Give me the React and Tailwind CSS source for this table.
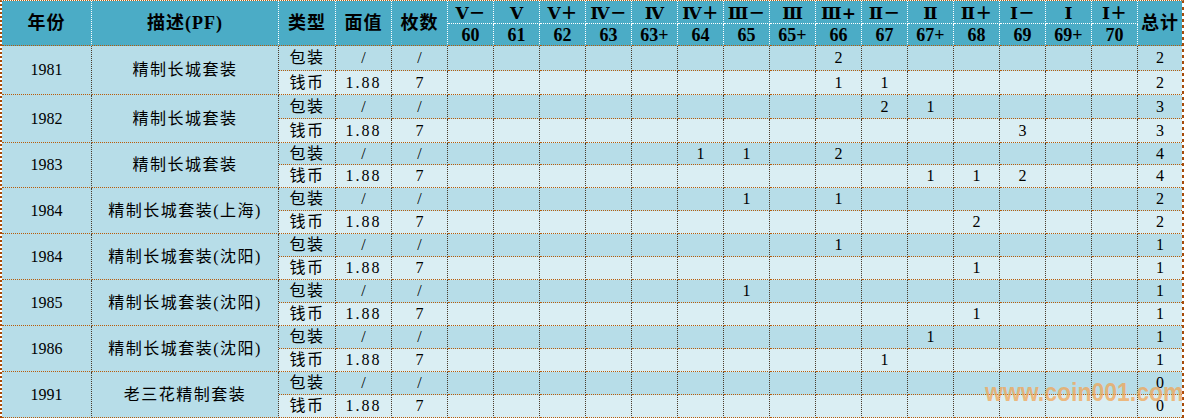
import React from 'react';

const grades = [
    ['Ⅴ－', '60'], ['Ⅴ', '61'], ['Ⅴ＋', '62'], ['Ⅳ－', '63'], ['Ⅳ', '63+'],
    ['Ⅳ＋', '64'], ['Ⅲ－', '65'], ['Ⅲ', '65+'], ['Ⅲ+', '66'], ['Ⅱ－', '67'],
    ['Ⅱ', '67+'], ['Ⅱ＋', '68'], ['Ⅰ－', '69'], ['Ⅰ', '69+'], ['Ⅰ＋', '70'],
];

// counts by grade index: { idx: count }
const rows = [
    { year: '1981', desc: '精制长城套装', pack: { 8: 2 }, coin: { 8: 1, 9: 1 }, t: [2, 2] },
    { year: '1982', desc: '精制长城套装', pack: { 9: 2, 10: 1 }, coin: { 12: 3 }, t: [3, 3] },
    { year: '1983', desc: '精制长城套装', pack: { 5: 1, 6: 1, 8: 2 }, coin: { 10: 1, 11: 1, 12: 2 }, t: [4, 4] },
    { year: '1984', desc: '精制长城套装(上海)', pack: { 6: 1, 8: 1 }, coin: { 11: 2 }, t: [2, 2] },
    { year: '1984', desc: '精制长城套装(沈阳)', pack: { 8: 1 }, coin: { 11: 1 }, t: [1, 1] },
    { year: '1985', desc: '精制长城套装(沈阳)', pack: { 6: 1 }, coin: { 11: 1 }, t: [1, 1] },
    { year: '1986', desc: '精制长城套装(沈阳)', pack: { 10: 1 }, coin: { 9: 1 }, t: [1, 1] },
    { year: '1991', desc: '老三花精制套装', pack: {}, coin: {}, t: [0, 0] },
];

const hd = 'flex items-center justify-center bg-[#4bacc6] border-r border-dotted border-r-white font-bold text-[17px] text-black';
const bd = 'flex items-center justify-center border-r border-b border-dotted border-r-[#4a3a2a] border-b-[#b85c0a] text-[16px] text-black';

export default function App() {
    return (
        <div className="relative w-[1185px] h-[418px] bg-white overflow-hidden">
            <div className="grid grid-cols-[90px_187px_57px_56px_56px_repeat(15,46px)_44px] grid-rows-[23px_22px_25px_24px_24px_24px_22px_23px_repeat(10,23px)] w-[1184px] border-l-2 border-r-[3px] border-t border-l-[#a64b0a] border-r-[#a64b0a] border-t-[#b85c0a] border-dotted font-['Liberation_Serif','Noto_Sans_CJK_SC',serif] leading-none">
                {/* header */}
                <div className={`${hd} row-span-2 border-b border-b-[#b85c0a] tracking-[1px] text-[18px]`}>年份</div>
                <div className={`${hd} row-span-2 border-b border-b-[#b85c0a] tracking-[1px] text-[18px]`}>描述(PF)</div>
                <div className={`${hd} row-span-2 border-b border-b-[#b85c0a] tracking-[1px] text-[18px]`}>类型</div>
                <div className={`${hd} row-span-2 border-b border-b-[#b85c0a] tracking-[1px] text-[18px]`}>面值</div>
                <div className={`${hd} row-span-2 border-b border-b-[#b85c0a] tracking-[1px] text-[18px]`}>枚数</div>
                {grades.map(g => (
                    <div key={'t' + g[1]} className={`${hd} border-b border-b-white pt-[2px] font-['DejaVu_Serif','Noto_Sans_CJK_SC',serif]`}>{g[0]}</div>
                ))}
                <div className="flex items-center justify-center bg-[#4bacc6] row-span-2 border-b border-dotted border-b-[#b85c0a] font-bold text-[18px] tracking-[1px] text-black">总计</div>
                {grades.map(g => (
                    <div key={'b' + g[1]} className={`${hd} border-b border-b-[#b85c0a] text-[18px]`}>{g[1]}</div>
                ))}

                {/* body */}
                {rows.map((r, i) => (
                    <React.Fragment key={i}>
                        <div className={`${bd} row-span-2 bg-[#b7dde8]`}>{r.year}</div>
                        <div className={`${bd} row-span-2 bg-[#b7dde8] tracking-[1.5px]`}>{r.desc}</div>
                        <div className={`${bd} bg-[#b7dde8] tracking-[1.5px]`}>包装</div>
                        <div className={`${bd} bg-[#b7dde8]`}>/</div>
                        <div className={`${bd} bg-[#b7dde8]`}>/</div>
                        {grades.map((g, j) => (
                            <div key={'p' + j} className={`${bd} bg-[#b7dde8]`}>{r.pack[j] || ''}</div>
                        ))}
                        <div className="flex items-center justify-center border-b border-dotted border-b-[#b85c0a] bg-[#b7dde8] text-[16px] text-black">{r.t[0]}</div>

                        <div className={`${bd} bg-[#daeef3] tracking-[1.5px]`}>钱币</div>
                        <div className={`${bd} bg-[#daeef3] tracking-[2px]`}>1.88</div>
                        <div className={`${bd} bg-[#daeef3]`}>7</div>
                        {grades.map((g, j) => (
                            <div key={'c' + j} className={`${bd} bg-[#daeef3]`}>{r.coin[j] || ''}</div>
                        ))}
                        <div className="flex items-center justify-center border-b border-dotted border-b-[#b85c0a] bg-[#daeef3] text-[16px] text-black">{r.t[1]}</div>
                    </React.Fragment>
                ))}
            </div>

            {/* watermark */}
            <div className="absolute left-[985px] top-[380px] font-['Liberation_Sans',sans-serif] font-bold text-[23px] leading-none text-[#f5a04a]/70 scale-y-110 origin-top-left pointer-events-none">
                www.coin001.com
            </div>
        </div>
    );
}
